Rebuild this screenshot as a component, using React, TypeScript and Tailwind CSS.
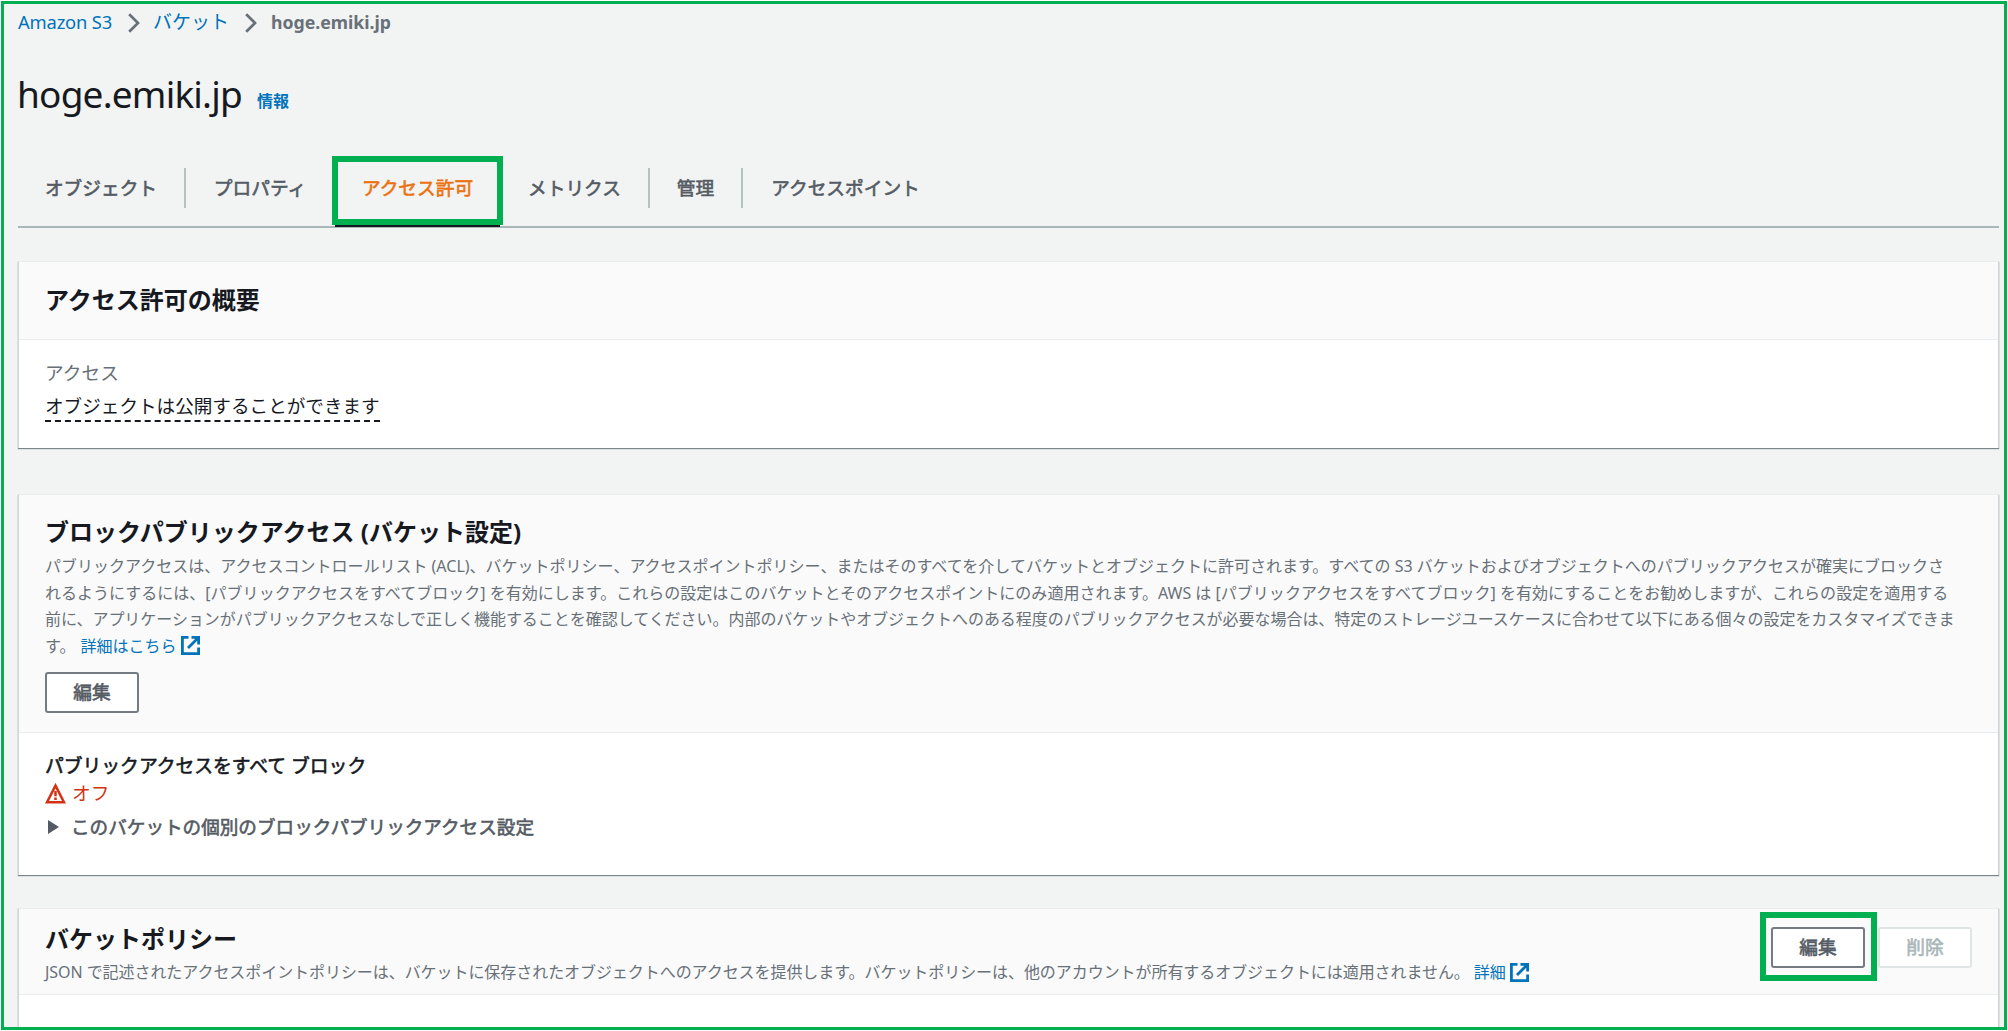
import type { ReactNode } from 'react';

const tabs = [
  { label: 'オブジェクト', size: 'w-[168px]', divider: true },
  { label: 'プロパティ', size: 'w-[148px]', divider: false },
  { label: 'アクセス許可', size: 'w-[167px]', divider: false, active: true },
  { label: 'メトリクス', size: 'w-[149px]', divider: true },
  { label: '管理', size: 'w-[93px]', divider: true },
  { label: 'アクセスポイント', size: 'w-[205px]', divider: false },
];

function Chevron() {
  return (
    <svg width="12" height="20" viewBox="0 0 12 20" fill="none" stroke="#687078" strokeWidth="2.7">
      <path d="M1.2 1.2 10 10 1.2 18.8" />
    </svg>
  );
}

function ExternalIcon({ className }: { className?: string }) {
  return (
    <svg
      width="19"
      height="19"
      viewBox="0 0 19 19"
      fill="none"
      stroke="#0073bb"
      strokeWidth="2.8"
      className={className}
    >
      <path d="M7.5 1.4H1.4v16.2h16.2v-6.1M10.5 1.4h7.1v7.1M17 2 7 12" />
    </svg>
  );
}

function Button({ children, disabled }: { children: ReactNode; disabled?: boolean }) {
  return (
    <button
      disabled={disabled}
      className="flex h-[41px] w-[94px] items-center justify-center rounded-[3px] border-2 border-[#757b83] bg-white pb-px text-[#545b64] [-webkit-text-stroke:0.6px] disabled:border-[#dfe4e4] disabled:text-[#aab7b8]"
    >
      {children}
    </button>
  );
}

function Card({ className, children }: { className: string; children: ReactNode }) {
  return (
    <section
      className={`border-x border-t border-x-[#d0d6d7] border-t-[#eaeded] bg-white shadow-[0_1px_1px_0_rgba(0,28,36,0.5)] ${className}`}
    >
      {children}
    </section>
  );
}

export default function App() {
  return (
    <div className="h-[1031px] w-[2008px] overflow-hidden bg-white p-px font-['Noto_Sans','Noto_Sans_CJK_JP',sans-serif] text-[18.7px] whitespace-nowrap text-[#16191f]">
      <div className="h-[1029px] overflow-hidden border-[3px] border-[#00b050] bg-[#f2f3f3] pr-[5px] pl-[14px]">
        <nav className="flex h-[38px] items-center leading-[28px]">
          <a className="w-[110px] pb-[2px] text-[18.4px] tracking-[-0.2px] text-[#0073bb]">Amazon S3</a>
          <Chevron />
          <a className="ml-[13px] w-[92px] pb-[2px] text-[19px] text-[#0073bb]">バケット</a>
          <Chevron />
          <span className="ml-[14px] pb-[2px] text-[17.7px] font-bold text-[#687078]">hoge.emiki.jp</span>
        </nav>

        <div className="flex h-[114px] items-baseline pt-[27px]">
          <h1 className="-ml-px w-[240px] text-[37px] leading-[50px] tracking-[-0.8px]">hoge.emiki.jp</h1>
          <a className="relative -top-px text-[16px] font-bold text-[#0073bb]">情報</a>
        </div>

        <div className="flex h-[72px] border-b-2 border-[#aab7b8]">
          {tabs.map((tab) => (
            <div key={tab.label} className={`relative flex h-[64px] items-center ${tab.size}`}>
              <span
                className={`flex h-[40px] flex-1 items-center justify-center [-webkit-text-stroke:0.6px] ${
                  tab.active ? 'text-[#ec7211]' : 'text-[#545b64]'
                } ${tab.divider ? 'border-r-2 border-[#b6c1c2]' : ''}`}
              >
                {tab.label}
              </span>
              {tab.active && (
                <>
                  <div className="absolute top-[68px] left-px h-[3px] w-[165px] bg-[#16191f]" />
                  <div className="absolute top-0 -left-[2px] h-[69px] w-[171px] border-[6px] border-[#00b050]" />
                </>
              )}
            </div>
          ))}
        </div>

        <Card className="mt-[33px] h-[187px]">
          <header className="flex h-[78px] items-center border-b border-[#eaeded] bg-[#fafafa] px-[26px] pb-[2px]">
            <h2 className="text-[24px] leading-[32px] font-bold">アクセス許可の概要</h2>
          </header>
          <div className="px-[26px] pt-[18px]">
            <p className="leading-[30px] text-[#687078]">アクセス</p>
            <span className="mt-[3px] inline-block border-b-2 border-dashed border-[#16191f] text-[18.6px] leading-[29px]">
              オブジェクトは公開することができます
            </span>
          </div>
        </Card>

        <Card className="mt-[46px] h-[381px]">
          <header className="h-[238px] border-b border-[#eaeded] bg-[#fafafa] px-[26px] pt-[21px]">
            <h2 className="text-[24px] leading-[32px] font-bold">ブロックパブリックアクセス (バケット設定)</h2>
            <div className="mt-[5px] text-[16px] leading-[26.5px] text-[#687078]">
              <p>
                パブリックアクセスは、アクセスコントロールリスト (ACL)、バケットポリシー、アクセスポイントポリシー、またはそのすべてを介してバケットとオブジェクトに許可されます。すべての S3 バケットおよびオブジェクトへのパブリックアクセスが確実にブロックさ
              </p>
              <p className="tracking-[0.015px]">
                れるようにするには、[パブリックアクセスをすべてブロック] を有効にします。これらの設定はこのバケットとそのアクセスポイントにのみ適用されます。AWS は [パブリックアクセスをすべてブロック] を有効にすることをお勧めしますが、これらの設定を適用する
              </p>
              <p className="tracking-[-0.035px]">
                前に、アプリケーションがパブリックアクセスなしで正しく機能することを確認してください。内部のバケットやオブジェクトへのある程度のパブリックアクセスが必要な場合は、特定のストレージユースケースに合わせて以下にある個々の設定をカスタマイズできま
              </p>
              <p className="flex items-center">
                す。
                <a className="ml-[5px] flex items-center text-[#0073bb]">
                  詳細はこちら
                  <ExternalIcon className="ml-[5px]" />
                </a>
              </p>
            </div>
            <div className="mt-[13px]">
              <Button>編集</Button>
            </div>
          </header>
          <div className="px-[26px] pt-[20px]">
            <h3 className="text-[18.8px] leading-[27px] [-webkit-text-stroke:0.6px]">パブリックアクセスをすべて ブロック</h3>
            <div className="flex h-[27px] items-center text-[#d13212]">
              <svg width="21" height="21" viewBox="0 0 21 21" fill="none" stroke="#d13212" strokeWidth="2.5">
                <path d="M10.5 2.6 19 19.3H2Z" />
                <path d="M10.5 8v5.2M10.5 14.6v2.4" />
              </svg>
              <span className="ml-[6px]">オフ</span>
            </div>
            <div className="mt-[6px] flex h-[27px] items-center text-[18.6px] text-[#545b64] [-webkit-text-stroke:0.6px]">
              <svg width="11" height="14" viewBox="0 0 11 14" fill="#545b64" className="mr-[12px] ml-[3px]">
                <path d="M0 0 11 7 0 14Z" />
              </svg>
              このバケットの個別のブロックパブリックアクセス設定
            </div>
          </div>
        </Card>

        <Card className="mt-[33px] h-[140px]">
          <header className="flex h-[86px] justify-between border-b border-[#eaeded] bg-[#fafafa] px-[26px]">
            <div className="pt-[14px]">
              <h2 className="text-[24px] leading-[32px] font-bold">バケットポリシー</h2>
              <p className="flex items-center text-[16px] leading-[34px] tracking-[-0.06px] text-[#687078]">
                JSON で記述されたアクセスポイントポリシーは、バケットに保存されたオブジェクトへのアクセスを提供します。バケットポリシーは、他のアカウントが所有するオブジェクトには適用されません。
                <a className="ml-[4px] flex items-center text-[#0073bb]">
                  詳細
                  <ExternalIcon className="ml-[4px]" />
                </a>
              </p>
            </div>
            <div className="flex gap-[13px] pt-[18px]">
              <div className="relative">
                <Button>編集</Button>
                <div className="absolute -top-[15px] -left-[11px] h-[69px] w-[117px] border-[6px] border-[#00b050]" />
              </div>
              <Button disabled>削除</Button>
            </div>
          </header>
        </Card>
      </div>
    </div>
  );
}
